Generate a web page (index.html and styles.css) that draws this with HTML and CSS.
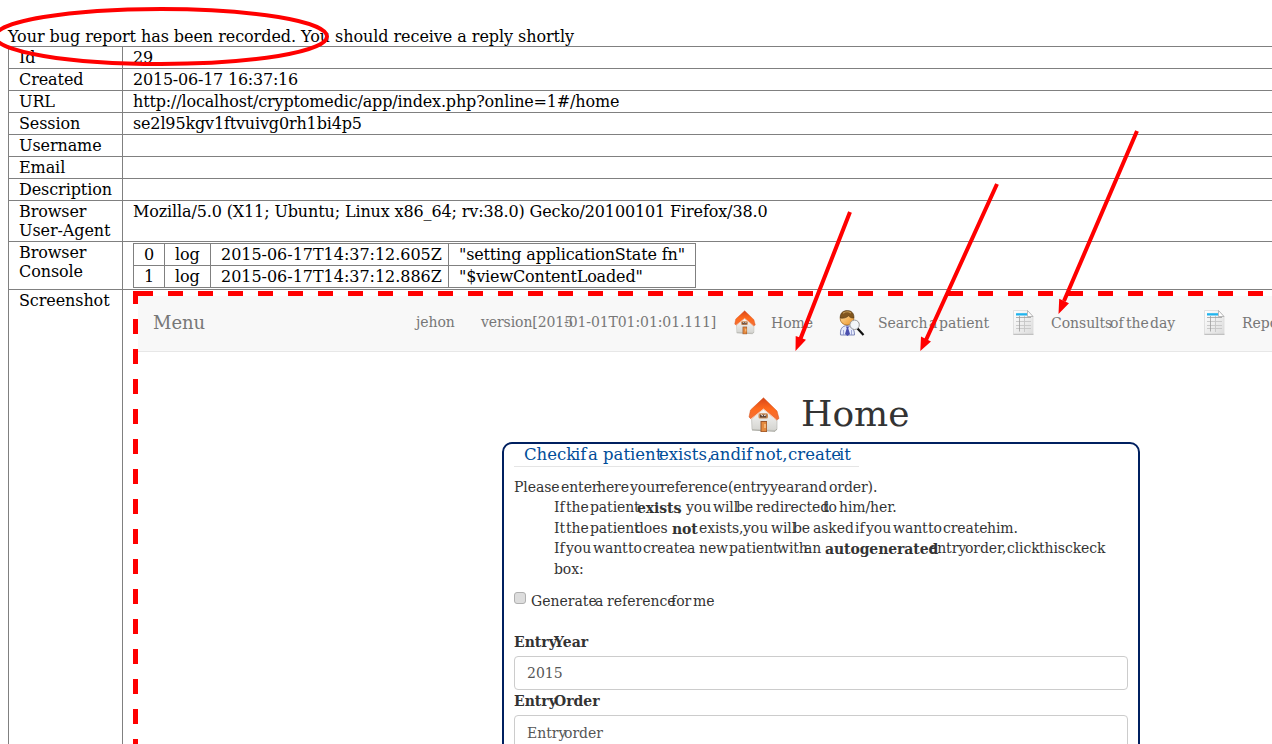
FILE: index.html
```html
<!DOCTYPE html>
<html lang="en">
<head>
<meta charset="utf-8">
<title>Bug report</title>
<link rel="stylesheet" href="styles.css">
</head>
<body>
<svg width="0" height="0" class="defs" aria-hidden="true">
  <defs>
    <linearGradient id="roof" x1="0" y1="0" x2="0" y2="1"><stop offset="0" stop-color="#d8451a"/><stop offset=".5" stop-color="#ff6a1c"/><stop offset="1" stop-color="#f0703a"/></linearGradient>
    <linearGradient id="wall" x1="0" y1="0" x2="0" y2="1"><stop offset="0" stop-color="#ffffff"/><stop offset="1" stop-color="#d4d4d0"/></linearGradient>
    <linearGradient id="paper" x1="0" y1="0" x2="1" y2="1"><stop offset="0" stop-color="#ffffff"/><stop offset="1" stop-color="#dcdcdc"/></linearGradient>
    <linearGradient id="head" x1="0" y1="0" x2="1" y2="1"><stop offset="0" stop-color="#ffe0a8"/><stop offset="1" stop-color="#ee9526"/></linearGradient>
    <symbol id="house" viewBox="0 0 32 36">
      <path d="M3.500 19 15 8 29 20V31.500L27 33.500 4 32.500Z" fill="url(#wall)" stroke="#b9b9b4" stroke-width=".7"/>
      <path d="M4 33 27 34.300 29 32" fill="none" stroke="#a8a8a0" stroke-width="1"/>
      <path d="M15.500.8 2.500 13 1 20 3 22 15.500 12 28.500 23 31 21.500 29 14Z" fill="url(#roof)" stroke="#d0501c" stroke-width=".5"/>
      <path d="M3 22 15.500 12 28.500 23" fill="none" stroke="#ffe3d2" stroke-width=".8"/>
      <rect x="10.500" y="16.300" width="9.500" height="5.200" rx="1.500" fill="#c98955"/>
      <path d="M12 17.800h6.300v2.700h-6.300z" fill="#5c4438"/><path d="M13 17.500l2 1.500M16 18.500l2-.5" stroke="#fff" stroke-width=".9"/>
      <path d="M12.500 24h6.500v11h-6.500z" fill="#9b562b"/><path d="M13.500 25h4.800v9.300h-4.800z" fill="#e48a3f"/><path d="M16 27h2v4h-2z" fill="#f6b473"/>
    </symbol>
    <symbol id="sheet" viewBox="0 0 21 25">
      <path d="M.5.500H14.500L20 6.500V24.500H.5Z" fill="url(#paper)" stroke="#dadada" stroke-width=".8"/>
      <path d="M.5 24.300H20.500" stroke="#b9b9b9"/>
      <path d="M14.500.500V6.500H20Z" fill="#fff" stroke="#a9a9a9" stroke-width=".8"/>
      <path d="M3 3.200h11v2.300H3z" fill="#20b4ee"/>
      <path d="M3 11.500h15M3 15.500h15M3 18.500h15M11.500 6v16" stroke="#c6c6c6" stroke-width=".9"/>
      <path d="M6.500 6v15.500M3 7.500h15" stroke="#9d9d9d" stroke-width=".8"/>
    </symbol>
    <symbol id="person" viewBox="0 0 26 27">
      <path d="M1.500 25C1 19 3 16 8 15.500 13 16 15.500 19 15.500 25Z" fill="#e6ebfd" stroke="#7c86b8" stroke-width="1"/>
      <path d="M7 16.500h3l-.7 2L11 24l-2.500 2L6 24l1.700-5.500Z" fill="#4a4fae"/>
      <path d="M4.500 20v5M12.500 20v5" stroke="#8b96cc" stroke-width=".8"/>
      <ellipse cx="8" cy="8.700" rx="6.800" ry="6.300" fill="url(#head)" stroke="#a86d25" stroke-width=".8"/>
      <path d="M1.200 8C1 3 4 .6 8.500.6S15.300 4 14.900 8C12 8.300 10.500 6.800 9.500 5.800 7.500 8 4 8.500 1.200 8Z" fill="#81561f" stroke="#4f3514" stroke-width=".6"/>
      <path d="M4 3.200C6.500 1.200 10 1.500 12 3" stroke="#c39a58" stroke-width="1.300" fill="none"/>
      <path d="M18.500 18.500 24.500 25" stroke="#111" stroke-width="2.200"/>
      <circle cx="15.600" cy="14.800" r="4.700" fill="#f2f6fa" fill-opacity=".92" stroke="#9a9a9a" stroke-width="1"/>
    </symbol>
  </defs>
</svg>

<p class="notice">Your bug report has been recorded. You should receive a reply shortly</p>
<table class="report">
  <tr><th>Id</th><td>29</td></tr>
  <tr><th>Created</th><td class="stamp">2015-06-17 16:37:16</td></tr>
  <tr><th>URL</th><td>http://localhost/cryptomedic/app/index.php?online=1#/home</td></tr>
  <tr><th>Session</th><td>se2l95kgv1ftvuivg0rh1bi4p5</td></tr>
  <tr><th>Username</th><td></td></tr>
  <tr><th>Email</th><td></td></tr>
  <tr><th>Description</th><td></td></tr>
  <tr><th>Browser<br>User-Agent</th><td class="agent">Mozilla/5.0 (X11; Ubuntu; Linux x86_64; rv:38.0) Gecko/20100101 Firefox/38.0</td></tr>
  <tr><th>Browser<br>Console</th><td>
    <table class="console">
      <colgroup><col class="num"><col class="kind"><col class="time"><col class="msg"></colgroup>
      <tr><td>0</td><td>log</td><td class="when">2015-06-17T14:37:12.605Z</td><td>"setting applicationState fn"</td></tr>
      <tr><td>1</td><td>log</td><td class="when">2015-06-17T14:37:12.886Z</td><td>"$viewContentLoaded"</td></tr>
    </table>
  </td></tr>
  <tr><th>Screenshot</th><td>
    <div class="shot">
      <nav class="nav">
        <span class="brand">Menu</span>
        <span class="user">jehon</span>
        <span class="version words"><span class="w83">version[2015</span><span>-01-01T01:01:01.111]</span></span>
        <svg class="i-house"><use href="#house"/></svg>
        <span class="n-home">Home</span>
        <svg class="i-person"><use href="#person"/></svg>
        <span class="n-search words"><span class="w51">Search</span><span class="w10">a</span><span>patient</span></span>
        <svg class="i-sheet"><use href="#sheet"/></svg>
        <span class="n-consult words"><span class="w59">Consults</span><span class="w16">of</span><span class="w24">the</span><span>day</span></span>
        <svg class="i-sheet"><use href="#sheet"/></svg>
        <span class="n-reports">Reports</span>
      </nav>
      <main class="page">
        <h1><svg class="i-big"><use href="#house"/></svg><span>Home</span></h1>
        <section class="box">
          <h2 class="words"><span class="w51">Check</span><span class="w13">if</span><span class="w15">a</span><span class="w56">patient</span><span class="w51">exists,</span><span class="w31">and</span><span class="w14">if</span><span class="w33">not,</span><span class="w51">create</span><span>it</span></h2>
          <p class="words"><span class="w47">Please</span><span class="w36">enter</span><span class="w33">here</span><span class="w30">your</span><span class="w68">reference</span><span class="w42">(entry</span><span class="w31">year</span><span class="w28">and</span><span>order).</span></p>
          <div class="indent">
            <p class="words"><span class="w12">If</span><span class="w24">the</span><span class="w47">patient</span><b class="w41">exists</b><span class="w8">,</span><span class="w27">you</span><span class="w23">will</span><span class="w20">be</span><span class="w67">redirected</span><span class="w16">to</span><span>him/her.</span></p>
            <p class="words"><span class="w12">It</span><span class="w24">the</span><span class="w45">patient</span><span class="w37">does</span><b class="w27">not</b><span class="w44">exists,</span><span class="w28">you</span><span class="w22">will</span><span class="w20">be</span><span class="w42">asked</span><span class="w11">if</span><span class="w27">you</span><span class="w35">want</span><span class="w15">to</span><span class="w44">create</span><span>him.</span></p>
            <p class="words"><span class="w12">If</span><span class="w27">you</span><span class="w35">want</span><span class="w15">to</span><span class="w44">create</span><span class="w12">a</span><span class="w30">new</span><span class="w48">patient</span><span class="w27">with</span><span class="w21">an</span><b class="w104">autogenerated</b><span class="w36">entry</span><span class="w42">order,</span><span class="w32">click</span><span class="w26">this</span><span>ckeck</span></p>
            <p>box:</p>
          </div>
          <div class="check"><i></i><span class="words"><span class="w64">Generate</span><span class="w12">a</span><span class="w64">reference</span><span class="w22">for</span><span>me</span></span></div>
          <div class="label words"><span class="w40">Entry</span><span>Year</span></div>
          <div class="field">2015</div>
          <div class="label words second"><span class="w40">Entry</span><span>Order</span></div>
          <div class="field words"><span class="w37">Entry</span><span>order</span></div>
        </section>
      </main>
    </div>
  </td></tr>
</table>
<svg class="marks" width="1272" height="744" viewBox="0 0 1272 744">
  <ellipse cx="161" cy="36.500" rx="166" ry="27.500"/>
  <path d="M850 212 800 340M997 184 926 340M1137 131 1064 301"/>
  <path class="tip" d="M795.500 351 795.700 336 806 339.800ZM920.300 351 921 336.500 931 341.500ZM1058.500 314 1059.200 298.800 1069 303.300Z"/>
</svg>
</body>
</html>
```
FILE: styles.css
```css
html { overflow: hidden; height: 744px; }
body { margin: 0; overflow: hidden; height: 744px; font: 16px/19px "DejaVu Serif", serif; color: #000; background: #fff; box-sizing: border-box; padding: 27px 0 0 8px; }
.defs { position: absolute; }
p, h1, h2 { margin: 0; font-weight: normal; }
.notice { white-space: nowrap; letter-spacing: -.058px; }
table { border-collapse: collapse; table-layout: fixed; }
th, td { border: 1px solid #808080; padding: 1px 10px; text-align: left; vertical-align: top; font-weight: normal; height: 19px; white-space: nowrap; }
.report { width: 1800px; }
.report th { width: 93px; letter-spacing: -.09px; }
.report td { letter-spacing: -.155px; }
.report .stamp { letter-spacing: -.22px; }
.report .agent { letter-spacing: -.13px; }
.report .when { letter-spacing: -.03px; }
.console { width: 563px; }
.num { width: 31px; }
.kind { width: 46px; }
.time { width: 238px; }

.shot {
  height: 900px;
  width: 1600px;
  box-sizing: border-box;
  padding: 5px 0 0 5px;
  color: #333;
  font-size: 14px;
  line-height: 20px;
  letter-spacing: 0;
  background:
    linear-gradient(#f00, #f00) 0 0 / 5px 5px no-repeat,
    repeating-linear-gradient(90deg, #f00 0 15px, #fff 15px 30px) 5px 0 / 1600px 5px no-repeat,
    repeating-linear-gradient(180deg, #f00 0 13px, #fff 13px 28px, #f00 28px 30px) 0 0 / 5px 900px no-repeat;
}
.words { display: flex; }
.words > * { flex: none; white-space: nowrap; }

.nav { display: flex; align-items: flex-start; height: 55px; background: #f8f8f8; border-bottom: 1px solid #e7e7e7; color: #777; }
.nav > * { flex: none; }
.nav > span { margin-top: 17px; letter-spacing: -.05px; }
.nav > svg { margin-top: 14px; }
.nav > .brand { width: 262px; padding-left: 15px; font-size: 18px; }
.nav > .user { width: 65px; margin: 16px 0 0 1px; }
.nav > .version { width: 253px; margin-top: 16px; letter-spacing: -.09px; }
.i-house { width: 22px; height: 25px; }
.n-home { width: 68px; margin-left: 15px; }
.i-person { width: 26px; height: 27px; }
.n-search { width: 135px; margin-left: 13px; }
.i-sheet { width: 21px; height: 25px; }
.n-consult { width: 153px; margin-left: 17px; }
.n-reports { margin-left: 17px; }

.page { width: 1366px; }
h1 { display: flex; height: 90px; padding-left: 610px; }
h1 span { font-size: 36px; line-height: 40px; margin: 42px 0 0 21px; }
.i-big { width: 32px; height: 36px; margin-top: 45px; }
.box { width: 614px; height: 500px; margin-left: 364px; padding: 0 10px; border: 2px solid #002060; border-radius: 10px; }
h2 { width: 335px; height: 21px; padding: 1px 0 0 10px; border-bottom: 1px solid #e5e5e5; color: #004d99; font-size: 16.5px; line-height: 20px; margin-bottom: 10px; }
.box p { letter-spacing: -.1px; }
.indent { padding-left: 40px; }
.indent p { height: 20.5px; }
.indent b { position: relative; top: 1px; }
.check { display: flex; margin-top: 12px; }
.check i { width: 10px; height: 10px; margin: 1px 5px 0 0; border: 1px solid #b0b0b0; border-radius: 3px; background: #ddd; }
.label { margin-top: 21px; font-weight: bold; }
.label.second { margin-top: 1px; }
.field { box-sizing: border-box; height: 34px; margin-top: 4px; padding: 6px 12px; border: 1px solid #ccc; border-radius: 4px; color: #555; }
.second + .field { padding-top: 7px; }

.w8 { width: 8px; }
.w10 { width: 10px; }
.w11 { width: 11px; }
.w12 { width: 12px; }
.w13 { width: 13px; }
.w14 { width: 14px; }
.w15 { width: 15px; }
.w16 { width: 16px; }
.w20 { width: 20px; }
.w21 { width: 21px; }
.w22 { width: 22px; }
.w23 { width: 23px; }
.w24 { width: 24px; }
.w26 { width: 26px; }
.w27 { width: 27px; }
.w28 { width: 28px; }
.w29 { width: 29px; }
.w30 { width: 30px; }
.w31 { width: 31px; }
.w32 { width: 32px; }
.w33 { width: 33px; }
.w35 { width: 35px; }
.w36 { width: 36px; }
.w37 { width: 37px; }
.w40 { width: 40px; }
.w41 { width: 41px; }
.w42 { width: 42px; }
.w44 { width: 44px; }
.w45 { width: 45px; }
.w47 { width: 47px; }
.w48 { width: 48px; }
.w51 { width: 51px; }
.w56 { width: 56px; }
.w59 { width: 59px; }
.w64 { width: 64px; }
.w67 { width: 67px; }
.w68 { width: 68px; }
.w83 { width: 83px; }
.w104 { width: 104px; }

.marks { position: absolute; left: 0; top: 0; fill: none; stroke: #f00; stroke-width: 4; }
.marks .tip { fill: #f00; stroke: none; }
```
